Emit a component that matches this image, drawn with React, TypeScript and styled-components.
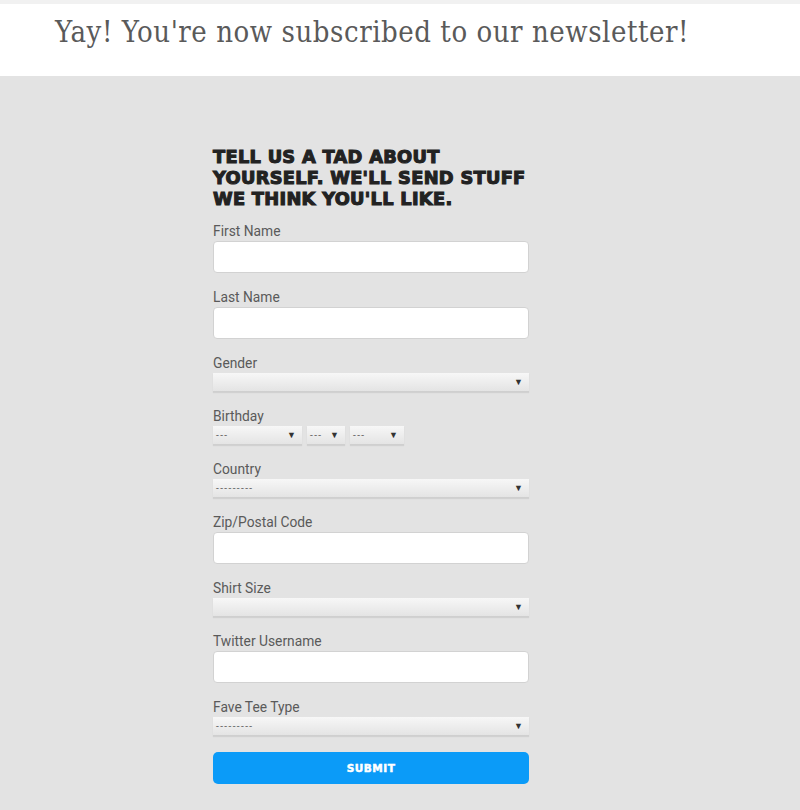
import styled, { createGlobalStyle } from 'styled-components';

const GlobalStyle = createGlobalStyle`
  html, body {
    margin: 0;
    padding: 0;
    background: #e3e3e3;
  }
  body {
    font-family: Roboto, 'Liberation Sans', sans-serif;
  }
`;

const Page = styled.div`
  display: flex;
  flex-direction: column;
  min-height: 810px;
  background: #e3e3e3;
`;

const TopStripe = styled.div`
  height: 4px;
  background: #f1f1f1;
`;

const Banner = styled.header`
  background: #ffffff;
  height: 72px;
  padding: 0 0 16px 55px;
  display: flex;
  align-items: center;
  box-sizing: border-box;
`;

const BannerText = styled.h1`
  margin: 0;
  font-family: 'DejaVu Serif Condensed', 'DejaVu Serif', serif;
  font-weight: normal;
  font-size: 29px;
  letter-spacing: 0.55px;
  color: #5a5a5a;
`;

const Main = styled.main`
  display: flex;
  justify-content: flex-start;
  padding: 70px 0 40px 213px;
`;

const Form = styled.form`
  width: 316px;
  display: flex;
  flex-direction: column;
`;

const Heading = styled.h2`
  margin: 0 0 15px;
  font-family: 'DejaVu Sans', 'Liberation Sans', sans-serif;
  font-weight: 900;
  font-size: 17.8px;
  line-height: 21px;
  letter-spacing: 0.3px;
  text-transform: uppercase;
  color: #222222;
  width: 340px;
  -webkit-text-stroke: 1.1px #222222;
`;

const Field = styled.div`
  display: flex;
  flex-direction: column;
  align-items: flex-start;
  margin-bottom: 17px;
`;

const Label = styled.label`
  font-size: 13.8px;
  line-height: 15px;
  color: #5a5a5a;
  margin-bottom: 2px;
`;

const TextInput = styled.input`
  box-sizing: border-box;
  width: 316px;
  height: 32px;
  background: #ffffff;
  border: 1px solid #d2d2d2;
  border-radius: 4px;
  outline: none;
  padding: 0 8px;
`;

const SelectBox = styled.div<{ $w: number }>`
  box-sizing: border-box;
  width: ${(p) => p.$w}px;
  height: 19px;
  display: flex;
  align-items: center;
  justify-content: space-between;
  padding: 0 6px 0 3px;
  background: linear-gradient(#f7f7f7, #e4e4e4);
  border-bottom: 1px solid #cfcfcf;
  box-shadow: 0 1px 1px rgba(0, 0, 0, 0.08);
`;

const Placeholder = styled.span`
  font-size: 10px;
  color: #666666;
  letter-spacing: 1.4px;
`;

const Arrow = styled.span`
  font-size: 9px;
  color: #333333;
`;

const SelectRow = styled.div`
  display: flex;
  gap: 5px;
`;

const Submit = styled.button`
  width: 316px;
  height: 32px;
  border: none;
  border-radius: 5px;
  background: #0b9bf8;
  color: #ffffff;
  font-family: 'DejaVu Sans', 'Liberation Sans', sans-serif;
  font-weight: 900;
  font-size: 10.5px;
  letter-spacing: 0.5px;
  -webkit-text-stroke: 0.5px #ffffff;
  margin-top: -1px;
  cursor: pointer;
`;

type SelectProps = { width: number; value?: string };

const Select = ({ width, value = '' }: SelectProps) => (
  <SelectBox $w={width}>
    <Placeholder>{value}</Placeholder>
    <Arrow>▼</Arrow>
  </SelectBox>
);

const App = () => {
  return (
    <Page>
      <GlobalStyle />
      <TopStripe />
      <Banner>
        <BannerText>Yay! You're now subscribed to our newsletter!</BannerText>
      </Banner>
      <Main>
        <Form onSubmit={(e) => e.preventDefault()}>
          <Heading>
            Tell us a tad about
            <br />
            yourself. We'll send stuff
            <br />
            we think you'll like.
          </Heading>
          <Field>
            <Label>First Name</Label>
            <TextInput />
          </Field>
          <Field>
            <Label>Last Name</Label>
            <TextInput />
          </Field>
          <Field>
            <Label>Gender</Label>
            <Select width={316} />
          </Field>
          <Field>
            <Label>Birthday</Label>
            <SelectRow>
              <Select width={89} value="---" />
              <Select width={38} value="---" />
              <Select width={54} value="---" />
            </SelectRow>
          </Field>
          <Field>
            <Label>Country</Label>
            <Select width={316} value="---------" />
          </Field>
          <Field>
            <Label>Zip/Postal Code</Label>
            <TextInput />
          </Field>
          <Field>
            <Label>Shirt Size</Label>
            <Select width={316} />
          </Field>
          <Field>
            <Label>Twitter Username</Label>
            <TextInput />
          </Field>
          <Field>
            <Label>Fave Tee Type</Label>
            <Select width={316} value="---------" />
          </Field>
          <Submit type="submit">SUBMIT</Submit>
        </Form>
      </Main>
    </Page>
  );
};

export default App;
